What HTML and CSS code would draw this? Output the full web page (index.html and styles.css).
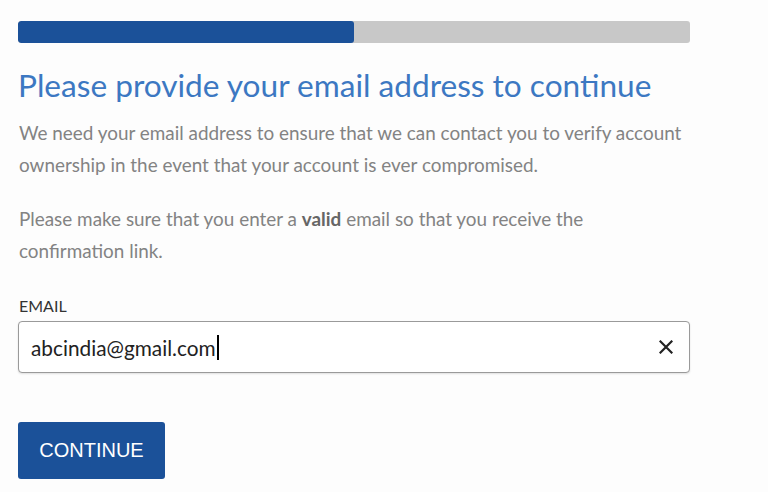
FILE: index.html
```html
<!DOCTYPE html>
<html lang="en">
<head>
<meta charset="utf-8">
<title>Email</title>
<link rel="stylesheet" href="styles.css">
</head>
<body>
<main class="page">
  <div class="progress"><div class="progress-fill" style="width:50%"></div></div>
  <h1 class="title">Please provide your email address to continue</h1>
  <p class="text">We need your email address to ensure that we can contact you to verify account ownership in the event that your account is ever compromised.</p>
  <p class="text">Please make sure that you enter a <strong class="strong">valid</strong> email so that you receive the confirmation link.</p>
  <label class="label" for="email">EMAIL</label>
  <div class="field">
    <span class="value">abcindia@gmail.com</span><span class="caret"></span>
    <svg class="clear" width="14" height="14" viewBox="0 0 14 14" aria-hidden="true"><path d="M1.5 1.5 L12.5 12.5 M12.5 1.5 L1.5 12.5" stroke="#222" stroke-width="2.2" stroke-linecap="square" fill="none"/></svg>
  </div>
  <button class="btn" type="button">CONTINUE</button>
</main>
</body>
</html>
```
FILE: styles.css
```css
html, body {
  margin: 0;
  padding: 0;
  background: #fdfdfd;
}
.page {
  width: 672px;
  padding: 21px 0 0 18px;
  font-family: Lato, "Open Sans", sans-serif;
}
.progress {
  height: 22px;
  background: #c8c8c8;
  border-radius: 3px;
  overflow: hidden;
  display: flex;
}
.progress-fill {
  background: #1b5199;
  border-radius: 3px;
}
.title {
  margin: 22px 0 0 0;
  font-weight: 400;
  font-size: 31.6px;
  line-height: 40px;
  color: #3c78c2;
}
.text {
  margin: 12px 0 22px 1px;
  font-size: 18.9px;
  line-height: 32px;
  color: #838383;
}
.text + .text { margin-top: 0; }
.strong { color: #666; font-weight: 700; }
.label {
  display: block;
  margin: 0 0 5px 1px;
  font-size: 16px;
  line-height: 20px;
  color: #333;
}
.text + .label { margin-top: 29px; }
.field {
  height: 50px;
  border: 1px solid #9a9a9a;
  border-radius: 4px;
  background: #fff;
  display: flex;
  align-items: center;
  padding: 0 16px 0 12px;
  box-shadow: 0 1px 2px rgba(0,0,0,0.12);
}
.value {
  font-size: 20.8px;
  color: #222;
}
.caret {
  width: 2px;
  height: 25px;
  background: #000;
  margin-left: 1px;
}
.clear { margin-left: auto; }
.btn {
  display: block;
  margin-top: 49px;
  width: 147px;
  height: 57px;
  background: #1b5199;
  color: #fff;
  border: none;
  border-radius: 3px;
  font-family: "Liberation Sans", Arial, sans-serif;
  font-size: 20px;
  padding: 0;
}
```
